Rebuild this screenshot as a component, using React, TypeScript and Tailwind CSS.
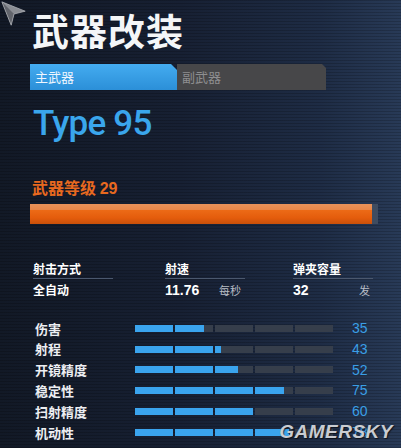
import React from 'react';

const stats = [
  { label: '伤害', value: 35 },
  { label: '射程', value: 43 },
  { label: '开镜精度', value: 52 },
  { label: '稳定性', value: 75 },
  { label: '扫射精度', value: 60 },
  { label: '机动性', value: 78 },
];

const cjk = "font-['Noto_Sans_CJK_SC',sans-serif]";

const StatBar: React.FC<{ value: number }> = ({ value }) => (
  <div className="flex gap-[2px] w-[198px] h-[7px]">
    {[0, 1, 2, 3, 4].map((i) => {
      const fill = Math.max(0, Math.min(1, (value - i * 20) / 20));
      return (
        <div key={i} className="flex-1 h-full bg-[#363e4b]">
          <div className="h-full bg-[#3aa4ee]" style={{ width: `${fill * 100}%` }} />
        </div>
      );
    })}
  </div>
);

const App: React.FC = () => {
  return (
    <div
      className={`relative w-[401px] h-[448px] overflow-hidden pl-[30px] text-white ${cjk} [background-image:repeating-linear-gradient(180deg,rgba(0,0,0,0.18)_0px,rgba(0,0,0,0.18)_1px,transparent_1px,transparent_3px),linear-gradient(90deg,#121926_0%,#172033_45%,#1e2c45_80%,#283a57_100%)]`}
    >
      {/* cursor arrow */}
      <svg className="absolute left-0 top-0" width="28" height="28" viewBox="0 0 30 30">
        <polygon points="2,2 27,12 15,15 12,27" fill="#8a8d93" />
        <polygon points="2,2 15,15 12,27" fill="#62656c" />
        <polyline points="2,2 27,12 15,15 12,27 2,2" fill="none" stroke="#b0b3b8" strokeWidth="0.8" />
      </svg>

      <div className="pt-[12px] pl-[2px]">
        <h1 className="text-[37px] leading-[37px] font-bold tracking-[1px] text-[#f4f6f8]">武器改装</h1>
      </div>

      <div className="flex mt-[15px] h-[26px]">
        <div className="w-[147px] h-full pl-[5px] flex items-center text-[13px] text-[#eef6ff] bg-[linear-gradient(180deg,#44acf0,#2b8fd8)] [clip-path:polygon(0_0,calc(100%-6px)_0,100%_6px,100%_100%,0_100%)]">
          主武器
        </div>
        <div className="w-[149px] h-full pl-[5px] flex items-center text-[13px] text-[#8e8e90] bg-[#474749] [clip-path:polygon(0_0,calc(100%-4px)_0,100%_4px,100%_100%,0_100%)]">
          副武器
        </div>
      </div>

      <div className="mt-[17px] pl-[3px] text-[35px] leading-[34px] font-medium tracking-[-0.8px] text-[#3aa6ec] font-['Roboto',sans-serif]">
        Type 95
      </div>

      <div className="mt-[38px] pl-[2px] text-[16px] leading-[16px] font-bold text-[#e8691f]">
        武器等级 <span className="font-['Liberation_Sans',sans-serif]">29</span>
      </div>

      <div className="mt-[7px] flex h-[20px] w-[348px]">
        <div className="w-[342px] h-full bg-[linear-gradient(180deg,#e8925a_0%,#e88749_28%,#ec6a16_32%,#e45c0c_70%,#c9500a_100%)]" />
        <div className="w-[6px] h-full bg-[#3f4c60]" />
      </div>

      <div className="mt-[39px] pl-[3px] flex text-[12px] font-bold">
        <div className="w-[132px]">
          <div className="w-[80px] leading-[12px] pb-[3px] border-b border-[#4b586e]">射击方式</div>
          <div className="w-[80px] mt-[3px] text-[12px] leading-[16px]">全自动</div>
        </div>
        <div className="w-[128px]">
          <div className="w-[80px] leading-[12px] pb-[3px] border-b border-[#4b586e]">射速</div>
          <div className="w-[80px] mt-[3px] flex justify-between items-center pr-[4px] leading-[16px]">
            <span className="text-[14px] font-['Liberation_Sans',sans-serif]">11.76</span>
            <span className="text-[11px] font-normal text-[#b9bec6]">每秒</span>
          </div>
        </div>
        <div className="w-[80px]">
          <div className="w-[80px] leading-[12px] pb-[3px] border-b border-[#4b586e]">弹夹容量</div>
          <div className="w-[80px] mt-[3px] flex justify-between items-center pr-[3px] leading-[16px]">
            <span className="text-[14px] font-['Liberation_Sans',sans-serif]">32</span>
            <span className="text-[11px] font-normal text-[#b9bec6]">发</span>
          </div>
        </div>
      </div>

      <div className="mt-[20px] pl-[5px]">
        {stats.map((s) => (
          <div key={s.label} className="flex items-center h-[20.8px]">
            <div className="w-[100px] text-[13px] font-bold text-[#eceef2]">{s.label}</div>
            <StatBar value={s.value} />
            <div className="ml-[19px] text-[14px] text-[#3a9fe6] font-['Liberation_Sans',sans-serif]">{s.value}</div>
          </div>
        ))}
      </div>

      <div className="absolute right-[8px] bottom-[7px] text-[19px] leading-[19px] font-black italic tracking-[0.5px] text-[#c9ccd1] [text-shadow:1px_1px_1px_rgba(0,0,0,0.6)] font-['Liberation_Sans',sans-serif]">
        GAMERSKY
      </div>
    </div>
  );
};

export default App;
